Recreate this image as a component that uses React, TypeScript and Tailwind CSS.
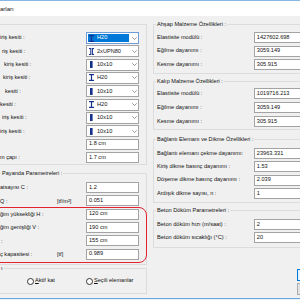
import type { ReactNode } from 'react'

const NAVY = '#14318c'

function BeamIcon({ kind }: { kind: 'H' | 'UPN' | 'box' }) {
  if (kind === 'H') {
    return (
      <svg width="5" height="7" viewBox="0 0 5 7" className="shrink-0">
        <rect x="0" y="0" width="5" height="1.2" fill={NAVY} />
        <rect x="1.9" y="1" width="1.2" height="5" fill={NAVY} />
        <rect x="0" y="5.8" width="5" height="1.2" fill={NAVY} />
      </svg>
    )
  }
  if (kind === 'UPN') {
    return (
      <svg width="5" height="7" viewBox="0 0 5 7" className="shrink-0">
        <rect x="0" y="0" width="1.8" height="1.1" fill={NAVY} />
        <rect x="1.3" y="0" width="1" height="7" fill={NAVY} />
        <rect x="0" y="5.9" width="1.8" height="1.1" fill={NAVY} />
        <rect x="2.9" y="0" width="1" height="7" fill={NAVY} />
        <rect x="3.4" y="0" width="1.6" height="1.1" fill={NAVY} />
        <rect x="3.4" y="5.9" width="1.6" height="1.1" fill={NAVY} />
      </svg>
    )
  }
  return (
    <svg width="5" height="7" viewBox="0 0 5 7" className="shrink-0">
      <rect x="1" y="0" width="2.6" height="7" fill={NAVY} />
    </svg>
  )
}

function Chevron() {
  return (
    <svg width="5" height="3" viewBox="0 0 5 3" className="ml-auto mr-[1px] shrink-0">
      <polyline points="0.3,0.3 2.5,2.5 4.7,0.3" fill="none" stroke="#6b6b6b" strokeWidth="0.7" />
    </svg>
  )
}

function Combo({ kind, value, selected = false }: { kind: 'H' | 'UPN' | 'box'; value: string; selected?: boolean }) {
  return (
    <div
      className={`flex items-center h-[12px] w-[53px] bg-white border ${
        selected ? 'border-[#6f9bd6]' : 'border-[#a3a3a3]'
      }`}
    >
      <div
        className={`flex items-center h-[8px] w-[41px] ml-px pl-px gap-[3px] ${
          selected ? 'bg-[#0078d7] text-white' : ''
        }`}
      >
        <BeamIcon kind={kind} />
        <span>{value}</span>
      </div>
      <Chevron />
    </div>
  )
}

function TextBox({ value, wide = false }: { value: string; wide?: boolean }) {
  return (
    <div
      className={`flex items-center h-[11px] bg-white border border-[#a3a3a3] pl-[2px] ${
        wide ? 'w-[60px]' : 'w-[53px]'
      }`}
    >
      {value}
    </div>
  )
}

function Group({ label, labelLeft = 'left-[2px]', className, children }: { label?: string; labelLeft?: string; className: string; children?: ReactNode }) {
  return (
    <div className={`relative border border-[#dcdcdc] ${className}`}>
      {label && (
        <span className={`absolute top-[-4px] ${labelLeft} px-px bg-[#f0f0f0] leading-[7px] whitespace-nowrap`}>
          {label}
        </span>
      )}
      {children}
    </div>
  )
}

function LeftRow({ label, pl = 'pl-0', unit, children }: { label: string; pl?: string; unit?: string; children: ReactNode }) {
  return (
    <div className="flex items-start h-[13.333px]">
      <div className={`flex items-center h-[12px] w-[57px] whitespace-nowrap ${pl}`}>{label}</div>
      <div className="flex items-center h-[12px] w-[29px]">{unit}</div>
      {children}
    </div>
  )
}

function RightRow({ label, value, h }: { label: string; value: string; h: string }) {
  return (
    <div className={`flex items-start ${h}`}>
      <div className="flex items-center h-[11px] w-[103px] pl-[3px] whitespace-nowrap">{label}</div>
      <TextBox value={value} wide />
    </div>
  )
}

function Radio({ children, width }: { children: ReactNode; width: string }) {
  return (
    <label className={`flex items-center gap-px ${width}`}>
      <span className="w-[7px] h-[7px] rounded-full border border-[#333] bg-white shrink-0" />
      <span className="whitespace-nowrap">{children}</span>
    </label>
  )
}

export default function App() {
  return (
    <div className="relative flex flex-col w-[300px] h-[300px] overflow-hidden bg-[#f0f0f0] text-[5.6px] leading-none text-[#111] font-['Liberation_Sans',Arial,sans-serif]">
      <div className="h-px bg-[#8ab6e2]" />
      <div className="flex items-center h-[15px] bg-white text-[6px]">arları</div>

      <div className="flex h-[282px]">
        {/* left column */}
        <div className="flex flex-col w-[148px] -ml-px">
          <Group className="mt-[8px] h-[141px] pt-[7px]">
            <LeftRow label="iriş kesiti :">
              <Combo kind="H" value="H20" selected />
            </LeftRow>
            <LeftRow label="riş kesiti :" pl="pl-[2px]">
              <Combo kind="UPN" value="2xUPN80" />
            </LeftRow>
            <LeftRow label="kiriş kesiti :" pl="pl-[4px]">
              <Combo kind="box" value="10x10" />
            </LeftRow>
            <LeftRow label="kiriş kesiti :" pl="pl-[3px]">
              <Combo kind="H" value="H20" />
            </LeftRow>
            <LeftRow label="kesiti :" pl="pl-[5px]">
              <Combo kind="box" value="10x10" />
            </LeftRow>
            <LeftRow label="kesiti :">
              <Combo kind="H" value="H20" />
            </LeftRow>
            <LeftRow label="iriş kesiti :" pl="pl-[2px]">
              <Combo kind="box" value="10x10" />
            </LeftRow>
            <LeftRow label="iriş kesiti :">
              <Combo kind="box" value="10x10" />
            </LeftRow>
            <LeftRow label="">
              <TextBox value="1.8 cm" />
            </LeftRow>
            <LeftRow label="m çapı :">
              <TextBox value="1.7 cm" />
            </LeftRow>
          </Group>

          <Group label="Payanda Parametreleri :" labelLeft="left-px" className="mt-[8px] h-[92px] pt-[8px]">
            <LeftRow label="atsayısı C :">
              <TextBox value="1.2" />
            </LeftRow>
            <LeftRow label="Q :" unit="[tf/m²]">
              <TextBox value="0.051" />
            </LeftRow>
            <LeftRow label="ğim yüksekliği H :">
              <TextBox value="120 cm" />
            </LeftRow>
            <LeftRow label="ğim genişliği V :">
              <TextBox value="190 cm" />
            </LeftRow>
            <LeftRow label=":" pl="pl-px">
              <TextBox value="155 cm" />
            </LeftRow>
            <LeftRow label="ç kapasitesi :" unit="[tf]">
              <TextBox value="0.989" />
            </LeftRow>
          </Group>

          <Group label="ı" labelLeft="left-0" className="mt-[3px] h-[26px] flex items-center pl-[27px]">
            <Radio width="w-[59px]">
              <u>A</u>ktif kat
            </Radio>
            <Radio width="w-[60px]">
              <u>S</u>eçili elemanlar
            </Radio>
          </Group>
        </div>

        {/* right column */}
        <div className="flex flex-col w-[160px] ml-[6px] shrink-0">
          <Group label="Ahşap Malzeme Özellikleri :" className="mt-[8px] h-[50px] pt-[7px]">
            <RightRow label="Elastisite modülü :" value="1427602.698" h="h-[13.5px]" />
            <RightRow label="Eğilme dayanımı :" value="3059.149" h="h-[13.5px]" />
            <RightRow label="Kesme dayanımı :" value="305.915" h="h-[13.5px]" />
          </Group>

          <Group label="Kalıp Malzeme Özellikleri :" className="mt-[7px] h-[49px] pt-[6px]">
            <RightRow label="Elastisite modülü :" value="1019716.213" h="h-[14px]" />
            <RightRow label="Eğilme dayanımı :" value="3059.149" h="h-[14px]" />
            <RightRow label="Kesme dayanımı :" value="305.915" h="h-[14px]" />
          </Group>

          <Group label="Bağlantı Elemanı ve Dikme Özellikleri :" className="mt-[9px] h-[64px] pt-[8px]">
            <RightRow label="Bağlantı elemanı çekme dayanımı:" value="23963.331" h="h-[13.333px]" />
            <RightRow label="Kiriş dikme basınç dayanımı :" value="1.53" h="h-[13.333px]" />
            <RightRow label="Döşeme dikme basınç dayanımı :" value="2.039" h="h-[13.333px]" />
            <RightRow label="Ardışık dikme sayısı, n :" value="1" h="h-[13.333px]" />
          </Group>

          <Group label="Beton Döküm Parametreleri :" className="mt-[7px] h-[38px] pt-[8px]">
            <RightRow label="Beton döküm hızı (m/saat) :" value="2" h="h-[13px]" />
            <RightRow label="Beton döküm sıcaklığı (°C) :" value="20" h="h-[13px]" />
          </Group>

          <div className="flex flex-col gap-[2px] mt-[21px] ml-[144px]">
            <div className="h-[12px] w-[20px] border border-[#0078d7] bg-[#e5f1fb]" />
            <div className="h-[12px] w-[20px] border border-[#adadad] bg-[#e1e1e1]" />
          </div>
        </div>
      </div>

      <div className="h-px bg-[#6aa6e0]" />
      <div className="h-px bg-[#e8f0f8]" />

      {/* red annotation drawn over the form */}
      <div className="absolute left-[-20px] top-[207px] w-[167px] h-[56px] rounded-[8px] border-[1.5px] border-[#e3222f] pointer-events-none" />
    </div>
  )
}
